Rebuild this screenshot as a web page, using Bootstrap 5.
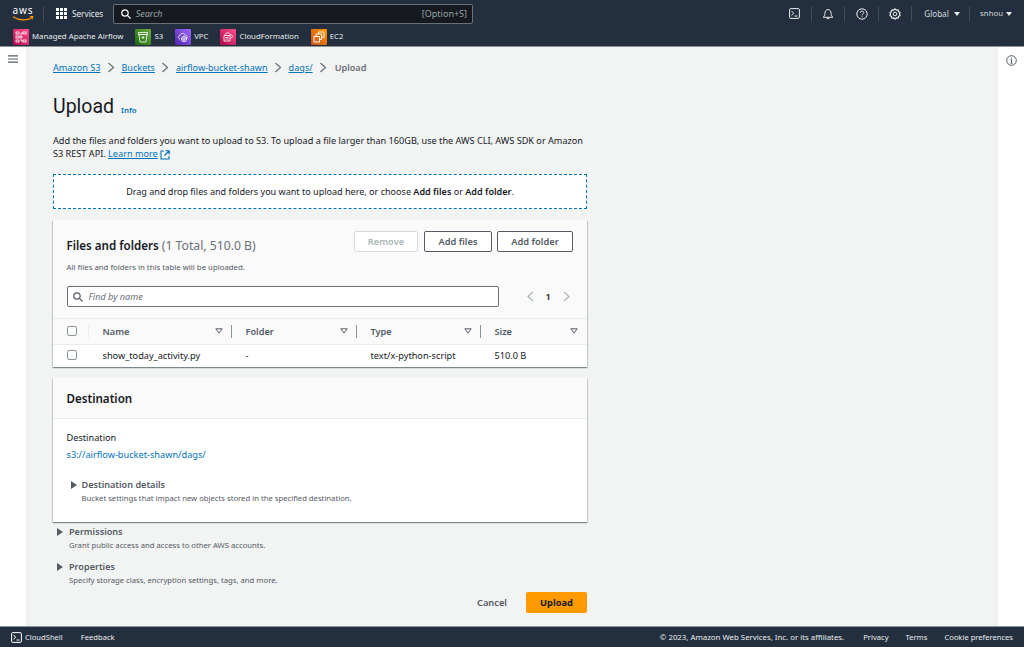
<!DOCTYPE html>
<html lang="en">
<head>
<meta charset="utf-8">
<title>Upload</title>
<link href="https://cdn.jsdelivr.net/npm/bootstrap@5.3.0/dist/css/bootstrap.min.css" rel="stylesheet">
<style>
html,body{height:647px;overflow:hidden}
body{font-family:"Noto Sans","Open Sans",sans-serif;font-size:9.2px;color:#16191f;background:#f2f3f3;line-height:13px}
a{color:#0073bb}
.top-bar{background:#232f3e;height:47px;border-bottom:1px solid #8d9296;color:#d5dbdb;flex:none}
.row-one{height:27px;padding-left:12px;padding-right:10px}
.row-two{height:19px;padding-left:13px;font-size:7.8px;color:#eaeded}
.aws-logo{width:22px;height:20px;margin-right:9px;overflow:visible}
.vr-line{width:1px;height:15px;background:#414d5c}
.svc-btn{font-size:8.2px;color:#eaeded;margin-left:12px;gap:5px;width:58px}
.search-box{width:360px;height:20px;background:#16191f;border:1px solid #687078;border-radius:2px;margin-left:-1px;padding:0 5px 0 7px;font-size:9px;color:#95a5a6}
.search-box i,.find-box i{font-style:italic}
.right-tools{margin-left:auto;gap:0}
.tool{width:33.3px;display:flex;justify-content:center;border-right:1px solid #414d5c;height:15px;align-items:center}
.tool.last{font-size:8.1px;gap:5px;color:#d5dbdb}
.tool.tool-global{width:58px;padding-left:3px}
.tool.tool-user{width:44px;border-right:0;justify-content:flex-end;padding-right:2px;font-size:7.8px;gap:3px}
.tri{width:0;height:0;border-left:3px solid transparent;border-right:3px solid transparent;border-top:4px solid #eaeded}
.svc-tile{width:16px;height:16px;border-radius:1px;display:flex;align-items:center;justify-content:center;flex:none}
.fav{gap:3px;white-space:nowrap}
.fav + .fav{margin-left:12px}
.page-wrap{flex:1;min-height:0}
.side-l{width:27px;background:#fff;border-right:1px solid #eaeded;flex:none;padding-top:8px}
.side-r{width:27px;background:#fff;border-left:1px solid #eaeded;flex:none;padding-top:8px;margin-left:auto}
.main-pane{padding-left:26px;width:561px;flex:none}
.crumbs{height:14px;margin-top:13px;font-size:9.1px;gap:6.5px;margin-bottom:0}
.crumbs a{color:#0073bb}
.crumb-sep{width:8px;height:11px}
.crumbs span{font-weight:600;color:#687078;margin-left:1px}
.page-title{font-family:Roboto,sans-serif;font-size:19.5px;font-weight:400;line-height:26px;margin:20px 0 0;color:#16191f}
.info-link{font-family:"Noto Sans",sans-serif;font-size:7.8px;font-weight:600;text-decoration:none;margin-left:7px}
.intro{margin:11px 0 0;width:534px;font-size:9.13px}
.drop-zone{height:35px;margin-top:14px;width:534px;background:#fff;border:1px dashed #0073bb;font-size:9.05px;border-radius:0}
.drop-zone b{font-weight:600}
.aws-card{width:534px;border:0;border-radius:0;box-shadow:0 1px 1px 0 rgba(0,28,36,.3),1px 1px 1px 0 rgba(0,28,36,.15),-1px 1px 1px 0 rgba(0,28,36,.15);background:#fff}
.card-one{height:147px;margin-top:11px}
.card-two{height:144px;margin-top:11px}
.head-one{height:99px;background:#fafafa;padding:11px 14px 0 13.5px;border-bottom:1px solid #eaeded}
.card-title-txt{font-size:11.6px;font-weight:600;margin:0;line-height:16px}
.card-title-txt span{font-weight:400;color:#687078;font-size:12.2px}
.title-one{margin-top:7px}
.btn-aws{font-size:9.3px;font-weight:600;height:21px;padding:0;line-height:19px;border:1px solid #545b64;color:#545b64;border-radius:2px;background:#fff}
.btn-aws:disabled{border-color:#d5dbdb;color:#aab7b8;background:#fff;opacity:1}
.btn-remove{width:64px;margin-right:6px}
.btn-files{width:68px;margin-right:5px}
.btn-folder{width:76px}
.hint{font-size:7.8px;color:#545b64;margin:8px 0 0;line-height:11px}
.find-row{margin-top:13px}
.find-box{height:21px;width:432px;background:#fff;border:1px solid #687078;border-radius:2px;padding:0 5px;color:#687078;font-size:9.1px;gap:6px}
.pager{font-weight:600;color:#16191f;gap:12px;margin-left:28px}
.file-table{table-layout:fixed;margin:0;font-size:9.2px;width:534px}
.file-table td,.file-table th{padding:0;border:0;vertical-align:middle;background:transparent;color:#16191f}
.file-table thead tr{height:25px;border-bottom:1px solid #eaeded;background:#fafafa}
.file-table tbody tr{height:22px}
.file-table th{color:#545b64;font-weight:600;position:relative}
.file-table th .cell,.file-table td .cell{display:flex;align-items:center;justify-content:space-between;padding-left:13.5px;padding-right:9px}
.chk{width:10px;height:10px;border:1px solid #879596;border-radius:2px;background:#fff;display:block;margin-left:13.5px}
.col-sep{position:absolute;right:0;top:6px;height:13px;width:1px;background:#879596}
.col-sep.pale{background:#eaeded}
.head-two{height:41px;background:#fafafa;border-bottom:1px solid #eaeded;padding:1px 13.5px 0;display:flex;align-items:center}
.dest-body{padding:12px 13.5px}
.dest-link{text-decoration:none;display:block;margin-top:4px}
.exp{display:flex;gap:6px;margin-left:4px}
.exp-arrow{width:0;height:0;border-top:4px solid transparent;border-bottom:4px solid transparent;border-left:6px solid #545b64;margin-top:3px;flex:none}
.exp-t{font-weight:600;color:#545b64;font-size:9.1px;line-height:13px}
.exp-d{color:#545b64;font-size:7.7px;line-height:13px;margin-top:1px}
.details-exp{margin-top:17px;gap:5px}
.perm-exp{margin-top:3px}
.prop-exp{margin-top:8px}
.acts{width:534px;gap:19px;margin-top:5px}
.btn-cancel{font-size:9.3px;font-weight:600;color:#545b64;background:transparent;border:0;padding:0}
.btn-orange{width:61px;height:21px;padding:0;font-size:9.3px;font-weight:700;color:#16191f;background:#ff9900;border:0;border-radius:2px}
.foot-bar{height:21px;background:#232f3e;border-top:1px solid #8d9296;color:#eaeded;font-size:7.6px;flex:none;padding:0 11px}
.foot-shell{margin-left:3px}
.foot-feedback{margin-left:18px}
.foot-links{gap:17px;margin-left:auto;white-space:nowrap}
.foot-copy{margin-right:2px;font-size:7.83px}
</style>
</head>
<body class="d-flex flex-column">
<nav class="top-bar">
  <div class="row-one d-flex align-items-center">
    <svg class="aws-logo" viewBox="0 0 44 40" fill="none"><text x="1" y="20" font-family="Noto Sans,sans-serif" font-size="20" font-weight="400" fill="#fff" textLength="40">aws</text><path d="M3 26c10 7 27 8 37 1" stroke="#f90" stroke-width="2.400" stroke-linecap="round"/><path d="M36 25l6 0-2 6" stroke="#f90" stroke-width="2"/></svg>
    <div class="vr-line"></div>
    <div class="svc-btn d-flex align-items-center">
      <svg width="11" height="11" viewBox="0 0 11 11" fill="#fff"><rect width="3" height="3"/><rect x="4" width="3" height="3"/><rect x="8" width="3" height="3"/><rect y="4" width="3" height="3"/><rect x="4" y="4" width="3" height="3"/><rect x="8" y="4" width="3" height="3"/><rect y="8" width="3" height="3"/><rect x="4" y="8" width="3" height="3"/><rect x="8" y="8" width="3" height="3"/></svg>
      <span>Services</span>
    </div>
    <div class="search-box d-flex align-items-center">
      <svg width="10" height="10" viewBox="0 0 10 10" fill="none" stroke="#fff" stroke-width="1.200"><circle cx="4" cy="4" r="3.200"/><path d="M6.400 6.400L9.500 9.500"/></svg>
      <i class="search-word">&nbsp;&nbsp;Search</i><span class="ms-auto">[Option+S]</span>
    </div>
    <div class="right-tools d-flex align-items-center">
      <div class="tool"><svg width="11" height="11" viewBox="0 0 11 11" fill="none" stroke="#eaeded"><rect x=".6" y=".6" width="9.800" height="9.800" rx="1.200"/><path d="M2.500 3l2.200 2.200-2.200 2.200M5.500 8h3"/></svg></div>
      <div class="tool"><svg width="12" height="12" viewBox="0 0 12 12" fill="none" stroke="#eaeded"><path d="M1.200 9.300c1.300-1 1.600-2 1.700-3.800C3 3.300 4 1.600 6 1.600s3 1.700 3.100 3.900c.1 1.800.4 2.800 1.700 3.800z"/><path d="M4.800 10.600h2.400"/></svg></div>
      <div class="tool"><svg width="12" height="12" viewBox="0 0 12 12" fill="none" stroke="#eaeded"><circle cx="6" cy="6" r="5.200"/><path d="M4.200 4.700C4.300 2.600 7.800 2.600 7.800 4.600c0 1.300-1.800 1.400-1.800 2.800"/><path d="M6 8.300v1"/></svg></div>
      <div class="tool"><svg width="12" height="12" viewBox="0 0 12 12" fill="none" stroke="#eaeded"><circle cx="6" cy="6" r="1.800"/><path d="M6 .8l1.300 1.300 1.800-.2.4 1.700 1.600.9-.7 1.500.7 1.500-1.600.9-.4 1.700-1.800-.2L6 11.200 4.700 9.900l-1.800.2-.4-1.700-1.600-.9L1.600 6 .9 4.500l1.600-.9.4-1.700 1.800.2z" stroke-width="1.100"/></svg></div>
      <div class="tool last tool-global">Global <span class="tri"></span></div>
      <div class="tool last tool-user">snhou <span class="tri"></span></div>
    </div>
  </div>
  <div class="row-two d-flex align-items-center">
    <div class="fav d-flex align-items-center"><span class="svc-tile" style="background:linear-gradient(45deg,#b0084d,#ff4f8b)"><svg width="12" height="12" viewBox="0 0 12 12" fill="none" stroke="#fff" stroke-width=".8"><rect x="1" y="1" width="3" height="2"/><rect x="1" y="5" width="3" height="2"/><rect x="1" y="9" width="3" height="2"/><rect x="8" y="1" width="3" height="2"/><rect x="8" y="9" width="3" height="2"/><path d="M4 6h4M6 2v8M6 2h2M6 10h2"/></svg></span>Managed Apache Airflow</div>
    <div class="fav d-flex align-items-center"><span class="svc-tile" style="background:linear-gradient(45deg,#1b660f,#6cae3e)"><svg width="12" height="12" viewBox="0 0 12 12" fill="none" stroke="#fff" stroke-width=".8"><path d="M1.500 3.500h9M2 3.500l1 7.500h6l1-7.500M1.500 1.500h9v2h-9zM6 5v3M4.500 6.500h3"/></svg></span>S3</div>
    <div class="fav d-flex align-items-center"><span class="svc-tile" style="background:linear-gradient(45deg,#4d27a8,#a166ff)"><svg width="12" height="12" viewBox="0 0 12 12" fill="none" stroke="#fff" stroke-width=".8"><path d="M3 8C1 8 .8 5 2.800 4.800 3 2 7 1.500 8 4c2 0 3 2.500 1.500 4"/><circle cx="7" cy="8" r="2.600"/><path d="M7 5.500v5M4.500 8h5"/></svg></span>VPC</div>
    <div class="fav d-flex align-items-center"><span class="svc-tile" style="background:linear-gradient(45deg,#b0084d,#ff4f8b)"><svg width="12" height="12" viewBox="0 0 12 12" fill="none" stroke="#fff" stroke-width=".8"><path d="M2 10V4.500h6V10zM3.500 6.500h3M3.500 8h3"/><path d="M3 4C3 1.500 7 1 8 3.500c2.500 0 3.500 3 1 3.500H8"/></svg></span>CloudFormation</div>
    <div class="fav d-flex align-items-center"><span class="svc-tile" style="background:linear-gradient(45deg,#c8511b,#ff9900)"><svg width="12" height="12" viewBox="0 0 12 12" fill="none" stroke="#fff" stroke-width=".9"><rect x="1" y="5.500" width="5.500" height="5.500"/><path d="M3 5.500V3h5.500v5.500H6.500"/><path d="M5.500 3V1H11v5.500H8.500"/></svg></span>EC2</div>
  </div>
</nav>

<div class="page-wrap d-flex">
  <div class="side-l d-flex justify-content-center align-items-start">
    <svg width="10" height="8" viewBox="0 0 10 8" stroke="#545b64" stroke-width="1.200"><path d="M0 .8h10M0 4h10M0 7.200h10"/></svg>
  </div>
  <main class="main-pane">
    <div class="crumbs d-flex align-items-center">
      <a href="#">Amazon S3</a><svg class="crumb-sep" viewBox="0 0 8 11" fill="none" stroke="#687078" stroke-width="1.200"><path d="M1.500 1L6.500 5.500 1.500 10"/></svg>
      <a href="#">Buckets</a><svg class="crumb-sep" viewBox="0 0 8 11" fill="none" stroke="#687078" stroke-width="1.200"><path d="M1.500 1L6.500 5.500 1.500 10"/></svg>
      <a href="#">airflow-bucket-shawn</a><svg class="crumb-sep" viewBox="0 0 8 11" fill="none" stroke="#687078" stroke-width="1.200"><path d="M1.500 1L6.500 5.500 1.500 10"/></svg>
      <a href="#">dags/</a><svg class="crumb-sep" viewBox="0 0 8 11" fill="none" stroke="#687078" stroke-width="1.200"><path d="M1.500 1L6.500 5.500 1.500 10"/></svg>
      <span>Upload</span>
    </div>
    <h1 class="page-title">Upload<a class="info-link" href="#">Info</a></h1>
    <p class="intro">Add the files and folders you want to upload to S3. To upload a file larger than 160GB, use the AWS CLI, AWS SDK or Amazon S3 REST API. <a href="#">Learn more</a> <svg width="10" height="10" viewBox="0 0 10 10" fill="none" stroke="#0073bb" stroke-width="1.100"><path d="M4 1H1v8h8V6M5.500 .8h3.700v3.700M9 1L4.500 5.500"/></svg></p>
    <div class="drop-zone d-flex align-items-center justify-content-center"><span>Drag and drop files and folders you want to upload here, or choose <b>Add files</b> or <b>Add folder</b>.</span></div>

    <section class="card aws-card card-one">
      <div class="head-one">
        <div class="d-flex align-items-start">
          <h2 class="card-title-txt title-one">Files and folders <span>(1 Total, 510.0 B)</span></h2>
          <div class="d-flex ms-auto">
            <button class="btn btn-aws btn-remove" disabled>Remove</button>
            <button class="btn btn-aws btn-files">Add files</button>
            <button class="btn btn-aws btn-folder">Add folder</button>
          </div>
        </div>
        <p class="hint">All files and folders in this table will be uploaded.</p>
        <div class="find-row d-flex align-items-center">
          <div class="find-box d-flex align-items-center"><svg width="10" height="10" viewBox="0 0 10 10" fill="none" stroke="#545b64" stroke-width="1.200"><circle cx="4" cy="4" r="3.200"/><path d="M6.400 6.400L9.500 9.500"/></svg><i>Find by name</i></div>
          <div class="pager d-flex align-items-center">
            <svg width="7" height="11" viewBox="0 0 7 11" fill="none" stroke="#aab7b8" stroke-width="1.200"><path d="M6 1L1 5.500 6 10"/></svg><span>1</span><svg width="7" height="11" viewBox="0 0 7 11" fill="none" stroke="#aab7b8" stroke-width="1.200"><path d="M1 1L6 5.500 1 10"/></svg>
          </div>
        </div>
      </div>
      <table class="table file-table">
        <colgroup><col style="width:36px"><col style="width:143px"><col style="width:125px"><col style="width:124px"><col style="width:106px"></colgroup>
        <thead><tr>
          <th><span class="chk"></span><span class="col-sep pale"></span></th>
          <th><div class="cell"><span>Name</span><svg width="8" height="6" viewBox="0 0 8 6" fill="none" stroke="#545b64"><path d="M.8.800h6.400L4 5z"/></svg></div><span class="col-sep"></span></th>
          <th><div class="cell"><span>Folder</span><svg width="8" height="6" viewBox="0 0 8 6" fill="none" stroke="#545b64"><path d="M.8.800h6.400L4 5z"/></svg></div><span class="col-sep"></span></th>
          <th><div class="cell"><span>Type</span><svg width="8" height="6" viewBox="0 0 8 6" fill="none" stroke="#545b64"><path d="M.8.800h6.400L4 5z"/></svg></div><span class="col-sep"></span></th>
          <th><div class="cell"><span>Size</span><svg width="8" height="6" viewBox="0 0 8 6" fill="none" stroke="#545b64"><path d="M.8.800h6.400L4 5z"/></svg></div></th>
        </tr></thead>
        <tbody><tr>
          <td><span class="chk"></span></td>
          <td><div class="cell">show_today_activity.py</div></td>
          <td><div class="cell">-</div></td>
          <td><div class="cell">text/x-python-script</div></td>
          <td><div class="cell">510.0 B</div></td>
        </tr></tbody>
      </table>
    </section>

    <section class="card aws-card card-two">
      <div class="head-two"><h2 class="card-title-txt">Destination</h2></div>
      <div class="dest-body">
        <div>Destination</div>
        <a class="dest-link" href="#">s3://airflow-bucket-shawn/dags/</a>
        <div class="exp details-exp"><span class="exp-arrow"></span><div><div class="exp-t">Destination details</div><div class="exp-d">Bucket settings that impact new objects stored in the specified destination.</div></div></div>
      </div>
    </section>

    <div class="exp perm-exp"><span class="exp-arrow"></span><div><div class="exp-t">Permissions</div><div class="exp-d">Grant public access and access to other AWS accounts.</div></div></div>
    <div class="exp prop-exp"><span class="exp-arrow"></span><div><div class="exp-t">Properties</div><div class="exp-d">Specify storage class, encryption settings, tags, and more.</div></div></div>
    <div class="acts d-flex justify-content-end align-items-center">
      <button class="btn btn-cancel">Cancel</button>
      <button class="btn btn-orange">Upload</button>
    </div>
  </main>
  <div class="side-r d-flex justify-content-center align-items-start">
    <svg width="11" height="11" viewBox="0 0 11 11" fill="none" stroke="#545b64"><circle cx="5.500" cy="5.500" r="4.800"/><path d="M5.500 4.500v3.500M4.500 8.200h2M4.500 4.600h1"/><path d="M5.500 2.500v1"/></svg>
  </div>
</div>

<footer class="foot-bar d-flex align-items-center">
  <svg width="11" height="11" viewBox="0 0 11 11" fill="none" stroke="#fff"><rect x=".6" y=".6" width="9.800" height="9.800" rx="1.200"/><path d="M2.500 3l2.200 2.200-2.200 2.200M5.500 8h3"/></svg>
  <span class="foot-shell">CloudShell</span>
  <span class="foot-feedback">Feedback</span>
  <div class="foot-links d-flex">
    <span class="foot-copy">© 2023, Amazon Web Services, Inc. or its affiliates.</span><span>Privacy</span><span>Terms</span><span>Cookie preferences</span>
  </div>
</footer>
</body>
</html>
